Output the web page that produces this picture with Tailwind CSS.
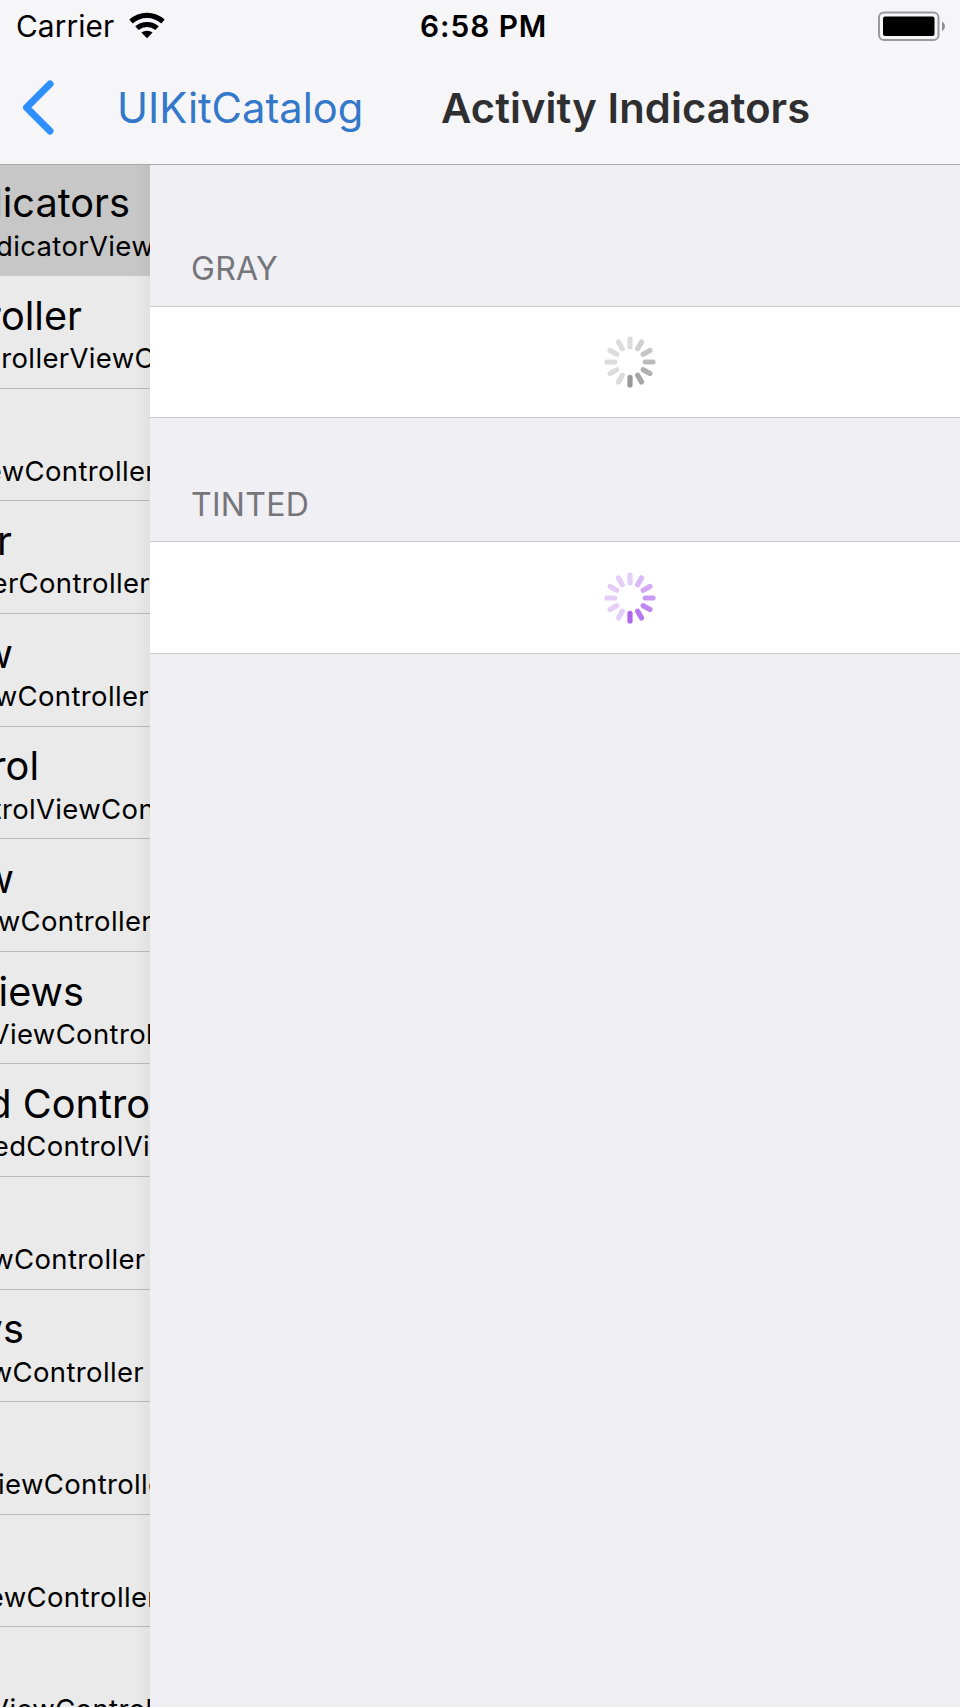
<!DOCTYPE html>
<html lang="en">
<head>
<meta charset="utf-8">
<title>Activity Indicators</title>
<script src="https://cdn.jsdelivr.net/npm/@tailwindcss/browser@4"></script>
</head>
<body class="w-[960px] h-[1707px] overflow-hidden bg-[#efeff4] font-['Inter','Liberation_Sans',sans-serif]">
<div class="flex flex-col w-full h-full">
  <header class="h-[165px] shrink-0 bg-[#f6f6f8] border-b border-[#a9a9ad] flex flex-col">
    <div class="h-[52px] grid grid-cols-[420px_1fr_auto] leading-none text-black text-[29.8px] pt-[12px] pl-4 pr-[14px]">
      <div class="flex gap-[13px]">
        <span class="w-[99px] whitespace-nowrap tracking-[0.1px]">Carrier</span>
        <svg width="38" height="28" viewBox="0 0 38 28"><path d="M1.300 7.600a26 26 0 0 1 35.400 0L33.300 11.600a21 21 0 0 0-28.600 0Z"/><path d="M7.200 14.300a18 18 0 0 1 23.600 0L27.300 17.900a13 13 0 0 0-16.600 0Z"/><path d="M13.400 20.600a9 9 0 0 1 11.200 0L19 26.300Z"/></svg>
      </div>
      <span class="font-semibold -ml-4 whitespace-nowrap tracking-[0.950px]">6:58 PM</span>
      <svg class="-mt-[1px]" width="68" height="31" viewBox="0 0 68 31"><rect x="1" y="1.500" width="59.500" height="27.500" rx="5" fill="none" stroke="#9a9a9c" stroke-width="2"/><rect x="5" y="5.500" width="51.500" height="19.500" rx="2"/><path d="M64 10.200q6 5 0 10Z" fill="#8e8e90"/></svg>
    </div>
    <div class="flex items-start leading-none text-[41.7px] whitespace-nowrap">
      <svg class="mt-[25px] ml-[20px]" width="36" height="60" viewBox="0 0 36 60"><path d="M30 7 6.500 30.500 30 54" fill="none" stroke="#2f8ffc" stroke-width="7" stroke-linecap="round" stroke-linejoin="round"/></svg>
      <span class="mt-[36px] ml-[61px] w-[324px] text-[#3478c9]">UIKitCatalog</span>
      <h1 class="mt-[36px] font-semibold text-[#2f2f31] tracking-[0.100px]">Activity Indicators</h1>
    </div>
  </header>
  <main class="flex flex-1 min-h-0">
    <aside class="w-[150px] shrink-0 overflow-hidden relative bg-[#eaeaea] text-black leading-none whitespace-nowrap">
      <ul class="-mt-[0.800px]">
        <li class="h-[112px] pt-[20.200px] flex flex-col items-end bg-[#c7c7c7]"><b class="h-[48.300px] font-normal text-[39.700px] mr-[20px]">dicators</b><span class="text-[27.500px] tracking-[0.350px] -mr-[4px]">dicatorView</span></li>
        <li class="h-[112.600px] pt-[20.800px] flex flex-col items-end border-b border-[#bcbcbe]"><b class="h-[48.300px] font-normal text-[39.700px] mr-[68px]">roller</b><span class="text-[27.500px] tracking-[0.350px] -mr-[5px]">rollerViewC</span></li>
        <li class="h-[112.600px] pt-[20.800px] flex flex-col items-end border-b border-[#bcbcbe]"><b class="h-[48.300px]"></b><span class="text-[27.500px] tracking-[0.350px] -mr-[6px]">ewController</span></li>
        <li class="h-[112.600px] pt-[20.800px] flex flex-col items-end border-b border-[#bcbcbe]"><b class="h-[48.300px] font-normal text-[39.700px] mr-[138px]">r</b><span class="text-[27.500px] tracking-[0.350px]">erController</span></li>
        <li class="h-[112.600px] pt-[20.800px] flex flex-col items-end border-b border-[#bcbcbe]"><b class="h-[48.300px] font-normal text-[39.700px] mr-[137px]">w</b><span class="text-[27.500px] tracking-[0.350px] mr-[1px]">wController</span></li>
        <li class="h-[112.600px] pt-[20.800px] flex flex-col items-end border-b border-[#bcbcbe]"><b class="h-[48.300px] font-normal text-[39.700px] mr-[111px]">rol</b><span class="text-[27.500px] tracking-[0.350px] -mr-[5px]">trolViewCon</span></li>
        <li class="h-[112.600px] pt-[20.800px] flex flex-col items-end border-b border-[#bcbcbe]"><b class="h-[48.300px] font-normal text-[39.700px] mr-[136px]">w</b><span class="text-[27.500px] tracking-[0.350px] -mr-[2px]">wController</span></li>
        <li class="h-[112.600px] pt-[20.800px] flex flex-col items-end border-b border-[#bcbcbe]"><b class="h-[48.300px] font-normal text-[39.700px] mr-[66px]">iews</b><span class="text-[27.500px] tracking-[0.350px] -mr-[3px]">ViewControl</span></li>
        <li class="h-[112.600px] pt-[20.800px] flex flex-col items-end border-b border-[#bcbcbe]"><b class="h-[48.300px] font-normal text-[39.700px]">d Contro</b><span class="text-[27.500px] tracking-[0.350px]">edControlVi</span></li>
        <li class="h-[112.600px] pt-[20.800px] flex flex-col items-end border-b border-[#bcbcbe]"><b class="h-[48.300px]"></b><span class="text-[27.500px] tracking-[0.350px] mr-[4.500px]">wController</span></li>
        <li class="h-[112.600px] pt-[20.800px] flex flex-col items-end border-b border-[#bcbcbe]"><b class="h-[48.300px] font-normal text-[39.700px] mr-[126px]">ws</b><span class="text-[27.500px] tracking-[0.350px] mr-[6px]">wController</span></li>
        <li class="h-[112.600px] pt-[20.800px] flex flex-col items-end border-b border-[#bcbcbe]"><b class="h-[48.300px]"></b><span class="text-[27.500px] tracking-[0.350px] -mr-[14.500px]">iewControlle</span></li>
        <li class="h-[112.600px] pt-[20.800px] flex flex-col items-end border-b border-[#bcbcbe]"><b class="h-[48.300px]"></b><span class="text-[27.500px] tracking-[0.350px] -mr-[8px]">ewController</span></li>
        <li class="h-[112.600px] pt-[20.800px] flex flex-col items-end"><b class="h-[48.300px]"></b><span class="text-[27.500px] tracking-[0.350px] -mr-[2.500px]">ViewControl</span></li>
      </ul>
      <div class="absolute inset-y-0 right-0 w-[16px] bg-linear-to-r from-black/0 to-black/4"></div>
    </aside>
    <section class="flex-1 leading-none text-[32px] text-[#75757a] tracking-[0.300px]">
      <h2 class="h-[141px] pt-[88px] pl-[41px]">GRAY</h2>
      <div class="h-[112px] bg-white border-y border-[#c9c9cd] flex items-center justify-center pl-[149px]">
        <svg width="56" height="56" viewBox="-28 -28 56 56" stroke-width="5.200" stroke-linecap="round"><path stroke="#dcdcdc" d="M0-15.300V-23"/><path stroke="#d0d0d0" d="M0-15.300V-23" transform="rotate(30)"/><path stroke="#c6c6c6" d="M0-15.300V-23" transform="rotate(60)"/><path stroke="#bbb" d="M0-15.300V-23" transform="rotate(90)"/><path stroke="#b0b0b0" d="M0-15.300V-23" transform="rotate(120)"/><path stroke="#a5a5a5" d="M0-15.300V-23" transform="rotate(150)"/><path stroke="#999" d="M0-15.300V-23" transform="rotate(180)"/><g stroke="#dcdcdc"><path d="M0-15.300V-23" transform="rotate(210)"/><path d="M0-15.300V-23" transform="rotate(240)"/><path d="M0-15.300V-23" transform="rotate(270)"/><path d="M0-15.300V-23" transform="rotate(300)"/><path d="M0-15.300V-23" transform="rotate(330)"/></g></svg>
      </div>
      <h2 class="h-[123px] pt-[70.500px] pl-[41px]">TINTED</h2>
      <div class="h-[113px] bg-white border-y border-[#c9c9cd] flex items-center justify-center pl-[149px]">
        <svg width="56" height="56" viewBox="-28 -28 56 56" stroke-width="5.200" stroke-linecap="round"><path stroke="#e4cdf8" d="M0-15.300V-23"/><path stroke="#dab9f7" d="M0-15.300V-23" transform="rotate(30)"/><path stroke="#d2a8f5" d="M0-15.300V-23" transform="rotate(60)"/><path stroke="#c998f3" d="M0-15.300V-23" transform="rotate(90)"/><path stroke="#c086f1" d="M0-15.300V-23" transform="rotate(120)"/><path stroke="#b876f0" d="M0-15.300V-23" transform="rotate(150)"/><path stroke="#af65ef" d="M0-15.300V-23" transform="rotate(180)"/><g stroke="#e4cdf8"><path d="M0-15.300V-23" transform="rotate(210)"/><path d="M0-15.300V-23" transform="rotate(240)"/><path d="M0-15.300V-23" transform="rotate(270)"/><path d="M0-15.300V-23" transform="rotate(300)"/><path d="M0-15.300V-23" transform="rotate(330)"/></g></svg>
      </div>
    </section>
  </main>
</div>
</body>
</html>
